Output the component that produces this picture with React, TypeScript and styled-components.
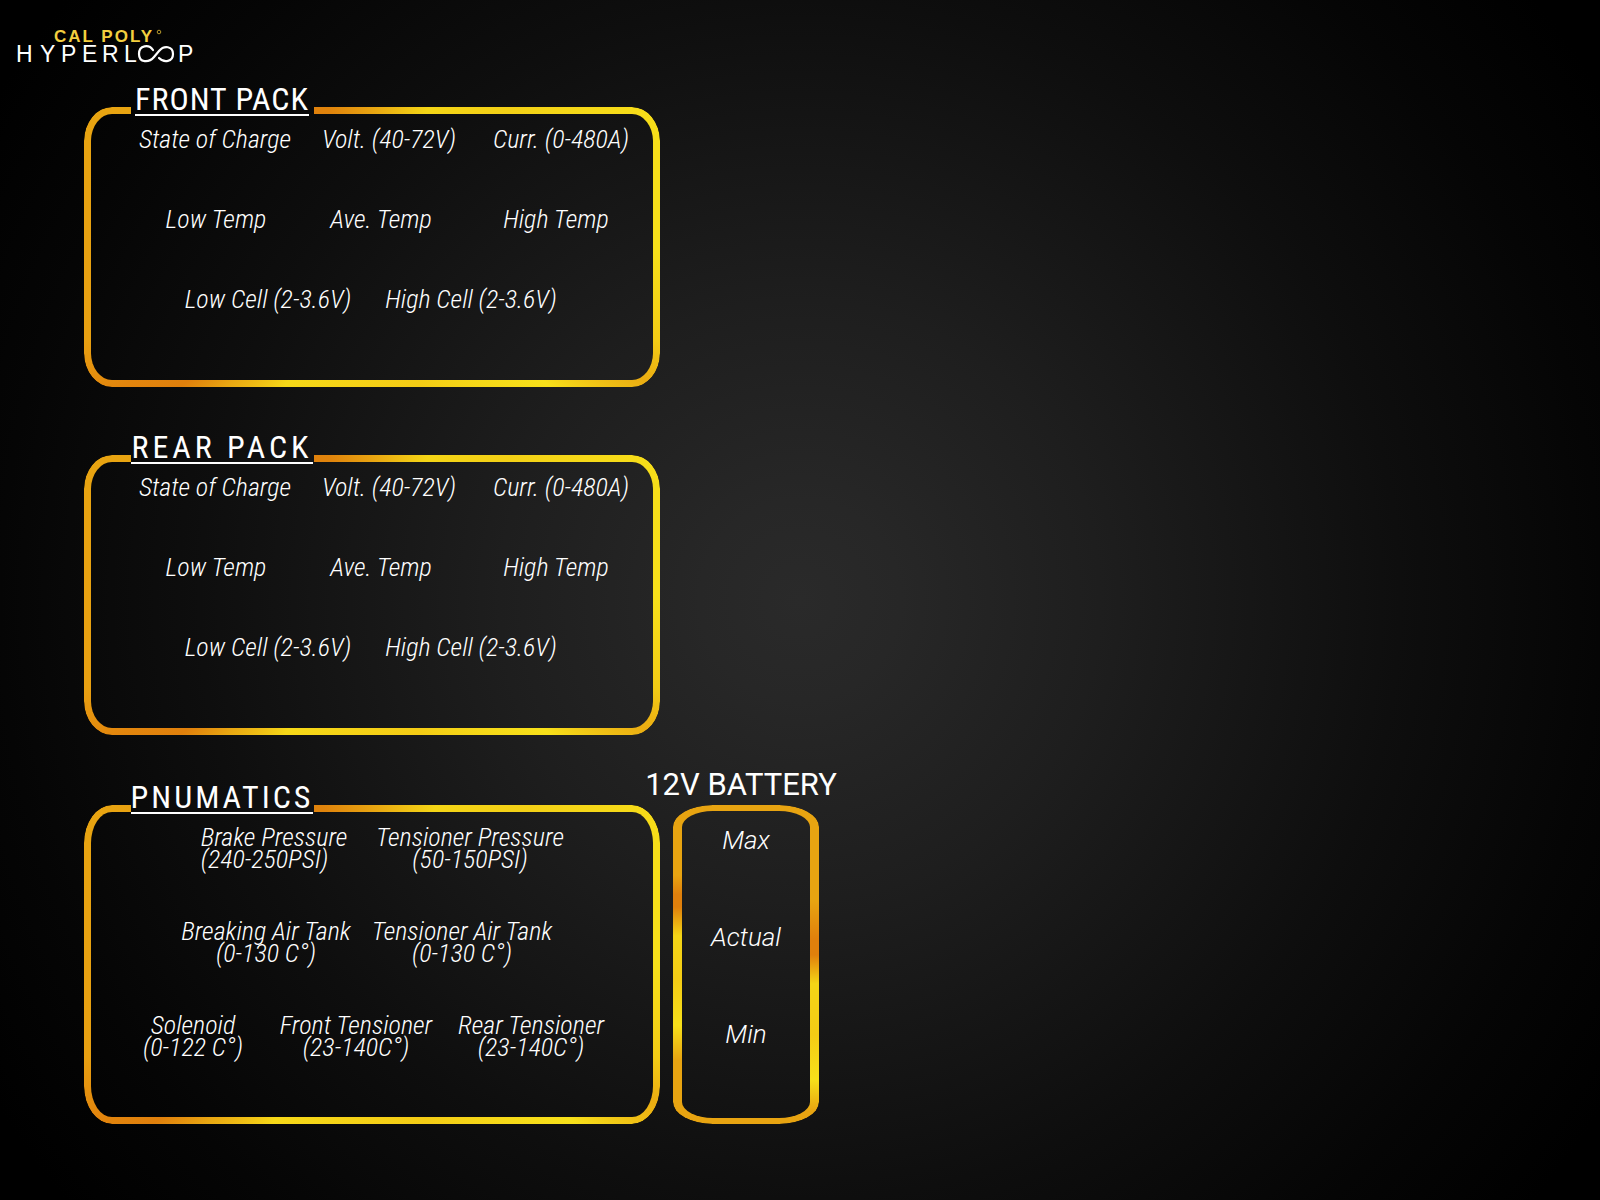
import React from "react";
import styled, { createGlobalStyle } from "styled-components";

const GlobalStyle = createGlobalStyle`
  * { box-sizing: border-box; }
  html { height: 100%; }
  body {
    margin: 0;
    min-height: 100%;
    background: #000;
    color: #fff;
    font-family: Roboto, "Liberation Sans", sans-serif;
  }
`;

const Page = styled.div`
  min-height: 100vh;
  padding: 24px 16px 76px;
  background: radial-gradient(
    circle farthest-corner at center,
    #2a2a2a, #272727 10%, #1e1e1e 30%, #0e0e0e 60%, #050505 80%, #000 95%
  );
`;

const Logo = styled.svg`
  display: block;
  width: 180px;
  height: 42px;
`;

const Dashboard = styled.main`
  display: grid;
  grid-template-columns: 576px 172px;
  align-items: end;
  row-gap: 44px;
  padding: 17px 0 0 68px;
`;

const Panel = styled.section<{ $height: number; $ry: number }>`
  grid-column: 1;
  position: relative;
  height: ${(p) => p.$height}px;
  padding: 1px 20px 0 46px;

  &::before {
    content: "";
    position: absolute;
    inset: 24px 0 0;
    padding: 7px;
    border-radius: 28px / ${(p) => p.$ry}px;
    background: conic-gradient(
      #e8a411 0deg, #f4d516 22deg, #f3d016 45deg, #f7dd19 64deg, #f7e01a 90deg,
      #f3cc15 108deg, #ebad12 116deg, #f7e01a 128deg, #f4cc15 161deg,
      #f6d818 212deg, #e9a812 226deg, #e0800c 234deg, #e2850d 241deg,
      #e8a011 252deg, #e8a411 300deg, #e0800c 334deg, #e0840c 343deg, #e8a411 360deg
    );
    mask: linear-gradient(#000 0 0) content-box exclude, linear-gradient(#000 0 0);
    clip-path: polygon(
      0 0, 47px 0, 47px 10px, 230px 10px, 230px 0, 100% 0, 100% 100%, 0 100%
    );
  }
`;

const TitleSlot = styled.div`
  position: relative;
  display: flex;
  justify-content: center;
  width: 184px;
  margin-bottom: 12px;
`;

const PanelTitle = styled.h2<{ $tracking: number }>`
  margin: 0;
  border-bottom: 2px solid #fff;
  font-family: "Roboto Condensed", Roboto, sans-serif;
  font-size: 32px;
  font-weight: 400;
  line-height: 30px;
  letter-spacing: ${(p) => p.$tracking}px;
  white-space: nowrap;
`;

const Row = styled.div<{ $columns: string; $start: number; $height: number }>`
  display: grid;
  grid-template-columns: ${(p) => p.$columns};
  height: ${(p) => p.$height}px;
  padding-left: ${(p) => p.$start}px;
  justify-items: center;
  align-items: start;
`;

const Label = styled.span<{ $left?: boolean }>`
  font-family: "Roboto Condensed", Roboto, sans-serif;
  font-size: 26px;
  font-style: italic;
  font-weight: 300;
  line-height: 22px;
  text-align: ${(p) => (p.$left ? "left" : "center")};
  white-space: pre;
`;

const Battery = styled.section`
  grid-column: 2;
  display: flex;
  flex-direction: column;
  align-items: center;
  margin-top: -10px;
`;

const BatteryTitle = styled.h2`
  margin: 0 10px 4px 0;
  font-size: 31px;
  font-weight: 400;
  line-height: 32px;
  white-space: nowrap;
`;

const BatteryFrame = styled.div`
  position: relative;
  display: flex;
  flex-direction: column;
  align-items: center;
  gap: 66px;
  width: 146px;
  height: 319px;
  padding-top: 20px;

  &::before {
    content: "";
    position: absolute;
    inset: 0;
    padding: 6px 9px;
    border-radius: 40px / 22px;
    background:
      linear-gradient(#e8a411 0 15%, #e8a411 22%, #e0800c 28%, #e0800c 32%, #f4d516 41%, #f4cc15 55%, #f7e01a 69%, #e8a411 80%) left / 50% 100% no-repeat,
      linear-gradient(#e8a411 0 30%, #e0800c 42%, #e0800c 47%, #f4d516 56%, #f4cc15 72%, #f7e01a 86%, #e8a411 96%) right / 50% 100% no-repeat;
    mask: linear-gradient(#000 0 0) content-box exclude, linear-gradient(#000 0 0);
  }
`;

const BatteryLabel = styled.span`
  font-size: 26px;
  font-style: italic;
  font-weight: 300;
  line-height: 31px;
`;

type Cell = { text: string; left?: boolean };
type RowData = { columns: string; start: number; cells: Cell[] };

const packRows: RowData[] = [
  { columns: "170px 178px 166px", start: 0, cells: [{ text: "State of Charge" }, { text: "Volt. (40-72V)" }, { text: "Curr. (0-480A)" }] },
  { columns: "172px 158px 192px", start: 0, cells: [{ text: "Low Temp" }, { text: "Ave. Temp" }, { text: "High Temp" }] },
  { columns: "176px 230px", start: 50, cells: [{ text: "Low Cell (2-3.6V)" }, { text: "High Cell (2-3.6V)" }] },
];

const airRows: RowData[] = [
  { columns: "188px 204px", start: 50, cells: [{ text: "Brake Pressure\n(240-250PSI)", left: true }, { text: "Tensioner Pressure\n(50-150PSI)" }] },
  { columns: "172px 220px", start: 50, cells: [{ text: "Breaking Air Tank\n(0-130 C°)" }, { text: "Tensioner Air Tank\n(0-130 C°)" }] },
  { columns: "126px 200px 150px", start: 0, cells: [{ text: "Solenoid\n(0-122 C°)" }, { text: "Front Tensioner\n(23-140C°)" }, { text: "Rear Tensioner\n(23-140C°)" }] },
];

function Rows({ rows, height }: { rows: RowData[]; height: number }) {
  return (
    <>
      {rows.map((row, i) => (
        <Row key={i} $columns={row.columns} $start={row.start} $height={height}>
          {row.cells.map((cell) => (
            <Label key={cell.text} $left={cell.left}>{cell.text}</Label>
          ))}
        </Row>
      ))}
    </>
  );
}

function BrandLogo() {
  return (
    <Logo viewBox="0 0 180 42" role="img" aria-label="Cal Poly Hyperloop">
      <g fontFamily="'Liberation Sans', Arial, sans-serif">
        <text x="38" y="18" fontSize="17" fontWeight="700" letterSpacing="2" fill="#f3cf3f">CAL POLY</text>
        <circle cx="143" cy="8" r="1.8" fill="none" stroke="#b89a2c" strokeWidth="1" />
        <g fill="#fff" fontSize="23">
          <text x="0 24 45 66 86 108" y="38">HYPERL</text>
          <text x="162" y="38">P</text>
        </g>
      </g>
      <path
        d="M137 26 C133 20 123 21 123 30 C123 39 133 39 138 33 L143 27 C148 21 157 22 157 30 C157 38 148 39 143 34"
        fill="none" stroke="#fff" strokeWidth="2.2" strokeLinecap="round"
      />
    </Logo>
  );
}

export default function App() {
  return (
    <>
      <GlobalStyle />
      <Page>
        <header><BrandLogo /></header>
        <Dashboard>
          <Panel $height={304} $ry={34}>
            <TitleSlot><PanelTitle $tracking={1}>FRONT PACK</PanelTitle></TitleSlot>
            <Rows rows={packRows} height={80} />
          </Panel>
          <Panel $height={304} $ry={34}>
            <TitleSlot><PanelTitle $tracking={4}>REAR PACK</PanelTitle></TitleSlot>
            <Rows rows={packRows} height={80} />
          </Panel>
          <Panel $height={343} $ry={38}>
            <TitleSlot><PanelTitle $tracking={3}>PNUMATICS</PanelTitle></TitleSlot>
            <Rows rows={airRows} height={94} />
          </Panel>
          <Battery>
            <BatteryTitle>12V BATTERY</BatteryTitle>
            <BatteryFrame>
              <BatteryLabel>Max</BatteryLabel>
              <BatteryLabel>Actual</BatteryLabel>
              <BatteryLabel>Min</BatteryLabel>
            </BatteryFrame>
          </Battery>
        </Dashboard>
      </Page>
    </>
  );
}
